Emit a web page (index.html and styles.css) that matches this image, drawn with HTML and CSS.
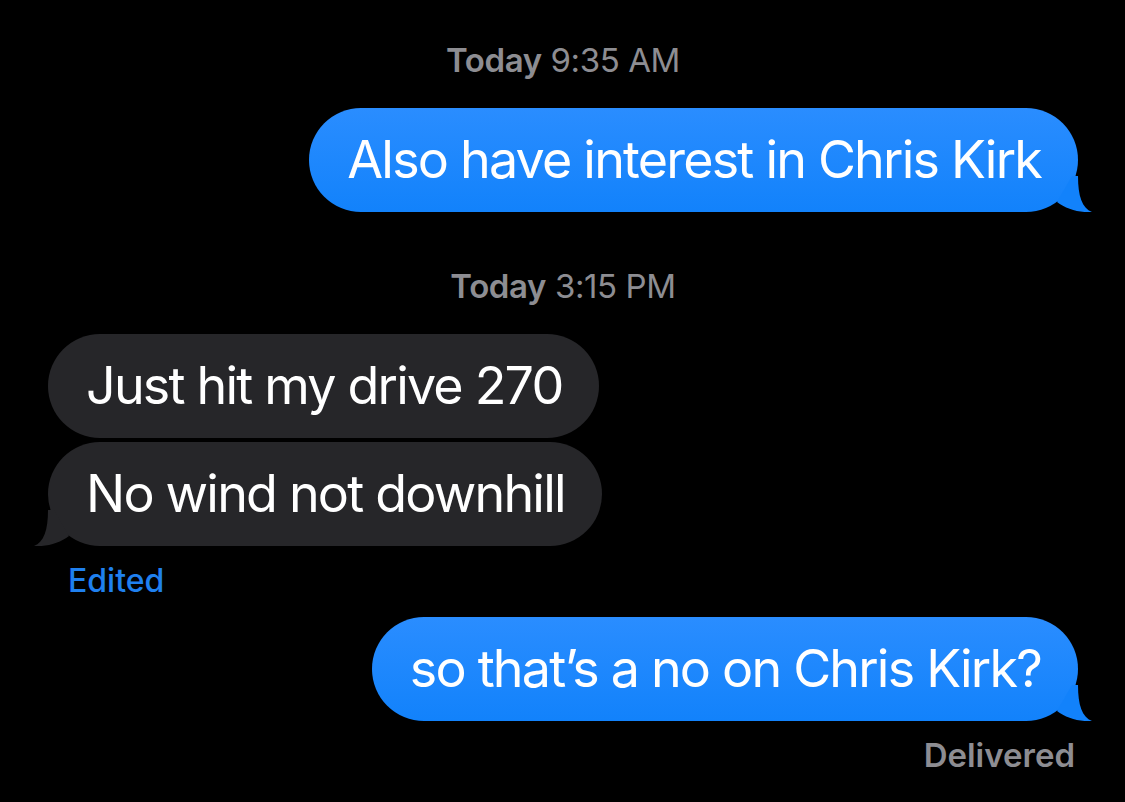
FILE: index.html
```html
<!DOCTYPE html>
<html>
<head>
<meta charset="utf-8">
<link rel="stylesheet" href="styles.css">
</head>
<body>
<div class="thread">
  <div class="stamp"><b>Today</b> 9:35 AM</div>
  <div class="row out gap-a">
    <div class="bubble blue">Also have interest in Chris Kirk
      <svg class="tail tail-r" viewBox="0 0 40 36" width="40" height="36"><path d="M20 0 L26 0 C26 20 30 32 40 36 C28 37 14 33 5 26 Z" fill="#1282fb"/></svg>
    </div>
  </div>
  <div class="stamp stamp2"><b>Today</b> 3:15 PM</div>
  <div class="row in gap-a">
    <div class="bubble gray">Just hit my drive 270</div>
  </div>
  <div class="row in gap-b">
    <div class="bubble gray">No wind not downhill
      <svg class="tail tail-l" viewBox="0 0 40 36" width="40" height="36"><path d="M20 0 L14 0 C14 20 10 32 0 36 C12 37 26 33 35 26 Z" fill="#262629"/></svg>
    </div>
  </div>
  <div class="edited">Edited</div>
  <div class="row out gap-c">
    <div class="bubble blue">so that’s a no on Chris Kirk?
      <svg class="tail tail-r" viewBox="0 0 40 36" width="40" height="36"><path d="M20 0 L26 0 C26 20 30 32 40 36 C28 37 14 33 5 26 Z" fill="#1282fb"/></svg>
    </div>
  </div>
  <div class="delivered">Delivered</div>
</div>
</body>
</html>
```

FILE: styles.css
```css
html, body {
  margin: 0;
  padding: 0;
  background: #000;
}
body {
  font-family: "Inter", "Liberation Sans", sans-serif;
  color: #fff;
}
.thread {
  display: flex;
  flex-direction: column;
  padding: 40px 47px 0 48px;
}
.stamp {
  text-align: center;
  font-size: 33px;
  line-height: 40px;
  color: #8d8d92;
  font-weight: 400;
  letter-spacing: -0.4px;
}
.stamp b {
  font-weight: 600;
}
.stamp2 {
  margin-top: 54px;
}
.row {
  display: flex;
}
.row.out {
  justify-content: flex-end;
}
.row.in {
  justify-content: flex-start;
}
.gap-a { margin-top: 28px; }
.gap-b { margin-top: 4px; }
.gap-c { margin-top: 16px; }
.bubble {
  position: relative;
  font-size: 52px;
  line-height: 64px;
  letter-spacing: -1.8px;
  padding: 20px 37px 20px 38px;
  border-radius: 52px;
  white-space: nowrap;
}
.blue {
  background: linear-gradient(#2a8dff, #1282fb);
}
.gray {
  background: #262629;
}
.tail {
  position: absolute;
  bottom: 0;
  display: block;
}
.tail-r {
  right: -14px;
}
.tail-l {
  left: -14px;
}
.edited {
  margin: 15px 0 0 20px;
  font-size: 32px;
  line-height: 40px;
  color: #1f80ef;
  font-weight: 500;
}
.delivered {
  margin: 14px 3px 0 0;
  align-self: flex-end;
  font-size: 33px;
  line-height: 40px;
  color: #8d8d92;
  font-weight: 600;
}
```
